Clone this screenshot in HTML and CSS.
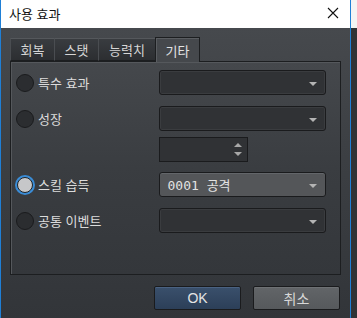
FILE: index.html
```html
<!DOCTYPE html>
<html lang="ko">
<head>
    <meta charset="UTF-8">
    <title>사용 효과</title>
    <link rel="stylesheet" href="styles.css">
</head>
<body>

<div class="screen">
    <div class="window">
        <div class="titlebar">
            <span class="title">사용 효과</span>
            <svg class="close" width="12" height="12" viewBox="0 0 12 12">
                <path d="M1 1 L11 11 M11 1 L1 11" stroke="#111" stroke-width="1.1" fill="none"/>
            </svg>
        </div>

        <div class="content">
            <!-- Tabs -->
            <div class="tabs">
                <div class="tab">회복</div>
                <div class="tab">스탯</div>
                <div class="tab wide">능력치</div>
                <div class="tab active">기타</div>
            </div>

            <div class="pane">
                <div class="row">
                    <label class="radio-label"><span class="radio"></span>특수 효과</label>
                    <div class="combo"><span class="arrow"></span></div>
                </div>
                <div class="row r2">
                    <label class="radio-label"><span class="radio"></span>성장</label>
                    <div class="combo"><span class="arrow"></span></div>
                </div>
                <div class="row r3">
                    <div class="spin">
                        <span class="spin-up"></span>
                        <span class="spin-down"></span>
                    </div>
                </div>
                <div class="row r4">
                    <label class="radio-label"><span class="radio checked"></span>스킬 습득</label>
                    <div class="combo filled"><span class="value">0001 공격</span><span class="arrow"></span></div>
                </div>
                <div class="row r5">
                    <label class="radio-label"><span class="radio"></span>공통 이벤트</label>
                    <div class="combo"><span class="arrow"></span></div>
                </div>
            </div>

            <div class="buttons">
                <button class="btn ok">OK</button>
                <button class="btn cancel">취소</button>
            </div>
        </div>
    </div>
    <div class="side">
        <div class="side-top"></div>
    </div>
</div>

</body>
</html>
```

FILE: styles.css
```css
* {
    margin: 0;
    padding: 0;
    box-sizing: border-box;
}

body, html {
    width: 100%;
    height: 100%;
    background: #33363a;
    font-family: "Noto Sans CJK KR", "Noto Sans", sans-serif;
    overflow: hidden;
}

.screen {
    display: flex;
    height: 318px;
}

.window {
    width: 351px;
    height: 318px;
    border-left: 1px solid #1f7fd6;
    border-right: 1px solid #1f7fd6;
    display: flex;
    flex-direction: column;
}

.side {
    flex: 1;
    background: #303336;
}

.side-top {
    height: 28px;
    background: #f4f4f4;
}

/* Title bar */
.titlebar {
    height: 28px;
    background: #fff;
    display: flex;
    align-items: center;
    justify-content: space-between;
    padding: 0 11px 0 8px;
}

.title {
    font-size: 13px;
    color: #111;
    margin-top: -1px;
}

.close {
    margin-top: -2px;
}

.content {
    flex: 1;
    background: linear-gradient(#46494d, #3d4044 40%, #323539);
    padding: 9px 0 0 9px;
}

/* Tabs */
.tabs {
    display: flex;
    align-items: flex-end;
    height: 24px;
}

.tab {
    width: 45px;
    height: 23px;
    background: linear-gradient(#393c40, #2c2e31);
    border: 1px solid #1c1e20;
    border-top-color: #55585c;
    border-left-color: #4a4d51;
    color: #d6d6d6;
    font-size: 13px;
    display: flex;
    align-items: center;
    justify-content: center;
    margin-right: -1px;
}

.tab.wide {
    width: 58px;
}

.tab.active {
    width: 45px;
    height: 25px;
    background: #45484c;
    border-color: #1c1e20;
    box-shadow: inset 1px 1px 0 #5a5d61;
    border-bottom: none;
    margin-bottom: -1px;
    position: relative;
    z-index: 1;
    color: #e2e2e2;
}

/* Pane */
.pane {
    width: 331px;
    height: 214px;
    border: 1px solid #1c1e20;
    box-shadow: inset 1px 1px 0 #55585c;
    background: linear-gradient(#45484c, #3a3d41 50%, #34373b);
    padding: 8px 14px 0 5px;
}

.row {
    display: flex;
    align-items: center;
    height: 25px;
}

.row.r2 { margin-top: 11px; }
.row.r3 { margin-top: 6px; padding-left: 143px; }
.row.r4 { margin-top: 10px; }
.row.r5 { margin-top: 11px; }

.radio-label {
    width: 143px;
    display: flex;
    align-items: center;
    color: #dcdcdc;
    font-size: 13px;
}

.radio {
    width: 18px;
    height: 18px;
    border-radius: 50%;
    background: #2b2d30;
    border: 1px solid #1a1b1d;
    margin-right: 4px;
    flex-shrink: 0;
}

.radio.checked {
    background: #c6c7c9;
    border: 1px solid #202224;
    box-shadow: 0 0 0 2px #3a8cd6;
    width: 16px;
    height: 16px;
    margin: 0 5px 0 1px;
}

/* Combo boxes */
.combo {
    width: 168px;
    height: 25px;
    border: 1px solid #1a1b1d;
    border-radius: 3px;
    background: #303235;
    box-shadow: inset 0 0 0 1px #3a3c3f;
    display: flex;
    align-items: center;
    justify-content: space-between;
    padding: 0 8px 0 8px;
}

.combo.filled {
    background: #545659;
    box-shadow: inset 0 1px 0 #63666a;
}

.value {
    font-family: "DejaVu Sans Mono", "Noto Sans CJK KR", monospace;
    font-size: 13px;
    color: #e2e2e2;
}

.arrow {
    margin-left: auto;
    width: 0;
    height: 0;
    border-left: 4px solid transparent;
    border-right: 4px solid transparent;
    border-top: 4px solid #b4b4b4;
    margin-top: 2px;
}

/* Spin box */
.spin {
    width: 89px;
    height: 25px;
    border: 1px solid #1a1b1d;
    background: #303235;
    display: flex;
    flex-direction: column;
    align-items: flex-end;
    justify-content: center;
    padding-right: 5px;
    gap: 5px;
}

.spin-up {
    width: 0;
    height: 0;
    border-left: 4px solid transparent;
    border-right: 4px solid transparent;
    border-bottom: 4px solid #a8a8a8;
}

.spin-down {
    width: 0;
    height: 0;
    border-left: 4px solid transparent;
    border-right: 4px solid transparent;
    border-top: 4px solid #a8a8a8;
}

/* Buttons */
.buttons {
    display: flex;
    justify-content: flex-end;
    gap: 12px;
    width: 331px;
    margin-top: 11px;
    padding-right: 1px;
}

.btn {
    width: 87px;
    height: 24px;
    border: 1px solid #1a1b1d;
    border-radius: 2px;
    font-family: "Liberation Sans", "Noto Sans CJK KR", sans-serif;
    font-size: 14px;
    color: #e4e4e4;
    cursor: pointer;
}

.btn.ok {
    background: linear-gradient(#3a506c, #2c3f58);
    box-shadow: inset 0 1px 0 #4a6282;
}

.btn.cancel {
    background: linear-gradient(#626568, #56595c);
    box-shadow: inset 0 1px 0 #6e7174;
    color: #d8d8d8;
}
```
